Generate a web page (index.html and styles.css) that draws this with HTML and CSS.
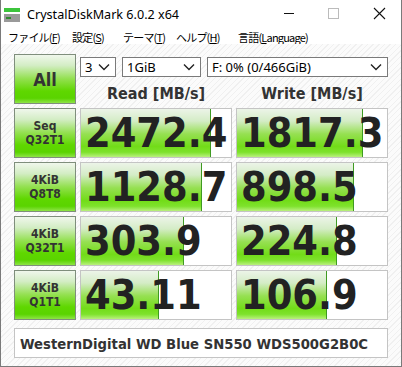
FILE: index.html
```html
<!DOCTYPE html>
<html lang="ja">
<head>
  <meta charset="UTF-8">
  <title>CrystalDiskMark 6.0.2 x64</title>
  <link rel="stylesheet" href="styles.css">
</head>
<body>
  <div class="window">
    <div class="titlebar">
      <svg class="app-icon" width="16" height="16" viewBox="0 0 16 16">
        <rect x="0" y="1" width="16" height="4" fill="#3cc43c"/>
        <rect x="0" y="7" width="16" height="8" fill="#9a9a9a"/>
        <rect x="2" y="10" width="5" height="2" fill="#2e8a2e"/>
      </svg>
      <span class="title">CrystalDiskMark 6.0.2 x64</span>
      <div class="caption">
        <svg width="46" height="30" viewBox="0 0 46 30"><line x1="21" y1="13.5" x2="31" y2="13.5" stroke="#111" stroke-width="1"/></svg>
        <svg width="46" height="30" viewBox="0 0 46 30"><rect x="19.5" y="8.5" width="10" height="10" fill="none" stroke="#bbb" stroke-width="1"/></svg>
        <svg width="46" height="30" viewBox="0 0 46 30"><path d="M19 8 L30 19 M30 8 L19 19" stroke="#111" stroke-width="1.1"/></svg>
      </div>
    </div>
    <div class="menubar">
      <span class="m-file">ファイル(<u>F</u>)</span>
      <span class="m-conf">設定(<u>S</u>)</span>
      <span class="m-theme">テーマ(<u>T</u>)</span>
      <span class="m-help">ヘルプ(<u>H</u>)</span>
      <span>言語(<u>L</u>anguage)</span>
    </div>

    <div class="content">
      <div class="board">
        <div class="btn all">All</div>
        <div class="top">
          <div class="selects">
            <div class="select s-count">3<svg width="12" height="8" viewBox="0 0 12 8"><path d="M1 1.5 L6 6.5 L11 1.5" fill="none" stroke="#222" stroke-width="1.4"/></svg></div>
            <div class="select s-size">1GiB<svg width="12" height="8" viewBox="0 0 12 8"><path d="M1 1.5 L6 6.5 L11 1.5" fill="none" stroke="#222" stroke-width="1.4"/></svg></div>
            <div class="select s-drive">F: 0% (0/466GiB)<svg width="12" height="8" viewBox="0 0 12 8"><path d="M1 1.5 L6 6.5 L11 1.5" fill="none" stroke="#222" stroke-width="1.4"/></svg></div>
          </div>
          <div class="heads">
            <div>Read [MB/s]</div>
            <div>Write [MB/s]</div>
          </div>
        </div>

        <div class="btn label"><span>Seq</span><span>Q32T1</span></div>
        <div class="cell" style="--fill: 130px">2472.4</div>
        <div class="cell" style="--fill: 126px">1817.3</div>

        <div class="btn label"><span>4KiB</span><span>Q8T8</span></div>
        <div class="cell" style="--fill: 121px">1128.7</div>
        <div class="cell" style="--fill: 117px">898.5</div>

        <div class="btn label"><span>4KiB</span><span>Q32T1</span></div>
        <div class="cell" style="--fill: 103px">303.9</div>
        <div class="cell" style="--fill: 100px">224.8</div>

        <div class="btn label"><span>4KiB</span><span>Q1T1</span></div>
        <div class="cell" style="--fill: 78px">43.11</div>
        <div class="cell" style="--fill: 90px">106.9</div>
      </div>

      <div class="comment">WesternDigital WD Blue SN550 WDS500G2B0C</div>
    </div>
  </div>
</body>
</html>
```

FILE: styles.css
```css
html, body {
  margin: 0;
  padding: 0;
  width: 402px;
  height: 367px;
  overflow: hidden;
}
.window {
  box-sizing: border-box;
  width: 402px;
  height: 367px;
  border: 1px solid #7a7a7a;
  border-top: none;
  background: #fff;
  display: flex;
  flex-direction: column;
}
.titlebar {
  height: 30px;
  display: flex;
  align-items: center;
  font-family: "Noto Sans", "Open Sans", sans-serif;
  font-size: 12.6px;
  color: #000;
}
.app-icon {
  margin-left: 3px;
  margin-right: 7px;
}
.title {
  flex: 1;
  margin-top: -1px;
}
.caption {
  display: flex;
}
.caption svg {
  display: block;
}
.menubar {
  height: 14px;
  display: flex;
  align-items: center;
  font-family: "Noto Sans CJK JP", sans-serif;
  font-size: 11px;
  letter-spacing: -0.8px;
  color: #000;
  padding-left: 7px;
}
.menubar span {
  line-height: 14px;
  white-space: nowrap;
}
.m-file { width: 64px; }
.m-conf { width: 51px; }
.m-theme { width: 53px; }
.m-help { width: 62px; }
.content {
  flex: 1;
  padding: 10px 13px 0 13px;
  background-color: #fbfbfb;
  background-image: repeating-linear-gradient(135deg, #fbfbfb 0, #fbfbfb 3px, #f0f0f0 3px, #f0f0f0 4px);
}
.board {
  display: grid;
  grid-template-columns: 62px 152px 152px;
  grid-template-rows: repeat(5, 50px);
  gap: 4px;
}
.btn {
  box-sizing: border-box;
  border: 1px solid #7f8e7c;
  background: linear-gradient(#f0f7ec 0%, #d3edc4 22%, #92e04e 50%, #5fd700 75%, #5ad400 90%, #8ee446 100%);
  display: flex;
  align-items: center;
  justify-content: center;
  text-align: center;
  color: #333;
  font-family: "DejaVu Sans Condensed", "DejaVu Sans", sans-serif;
  font-weight: bold;
}
.all {
  font-size: 18px;
}
.label {
  flex-direction: column;
  font-size: 12px;
}
.label span {
  display: block;
  height: 14px;
  line-height: 14px;
}
.top {
  grid-column: 2 / 4;
  display: flex;
  flex-direction: column;
}
.selects {
  display: flex;
  gap: 6px;
  margin-top: 3px;
}
.select {
  box-sizing: border-box;
  height: 20px;
  border: 1px solid #7a7a7a;
  background: #fff;
  display: flex;
  align-items: center;
  justify-content: space-between;
  padding: 0 5px 0 4px;
  font-family: "Noto Sans", "Open Sans", sans-serif;
  font-size: 13px;
  color: #000;
}
.s-count { width: 36px; }
.s-size { width: 79px; }
.s-drive { flex: 1; }
.heads {
  display: grid;
  grid-template-columns: 152px 152px;
  gap: 4px;
  margin-top: 7px;
  font-family: "DejaVu Sans Condensed", "DejaVu Sans", sans-serif;
  font-weight: bold;
  font-size: 16px;
  color: #333;
  text-align: center;
}
.cell {
  box-sizing: border-box;
  border: 1px solid #c4c4c4;
  background-color: #fff;
  background-image:
    linear-gradient(#3f9a22, #3f9a22),
    linear-gradient(#ecf4e8 0%, #d4ecc6 25%, #96e052 52%, #72dc18 78%, #7ee22c 90%, #baf07e 100%);
  background-repeat: no-repeat;
  background-size: 1px 100%, var(--fill) 100%;
  background-position: calc(var(--fill) - 1px) 0, 0 0;
  overflow: hidden;
  white-space: nowrap;
  padding-left: 4px;
  font-family: "DejaVu Sans Condensed", "DejaVu Sans", sans-serif;
  font-weight: bold;
  font-size: 41px;
  line-height: 48px;
  color: #222;
}
.comment {
  box-sizing: border-box;
  margin-top: 8px;
  height: 30px;
  width: 374px;
  border: 1px solid #c4c4c4;
  background: #fff;
  padding-left: 5px;
  display: flex;
  align-items: center;
  font-family: "DejaVu Sans Condensed", "DejaVu Sans", sans-serif;
  font-weight: bold;
  font-size: 14.7px;
  color: #333;
}
```
